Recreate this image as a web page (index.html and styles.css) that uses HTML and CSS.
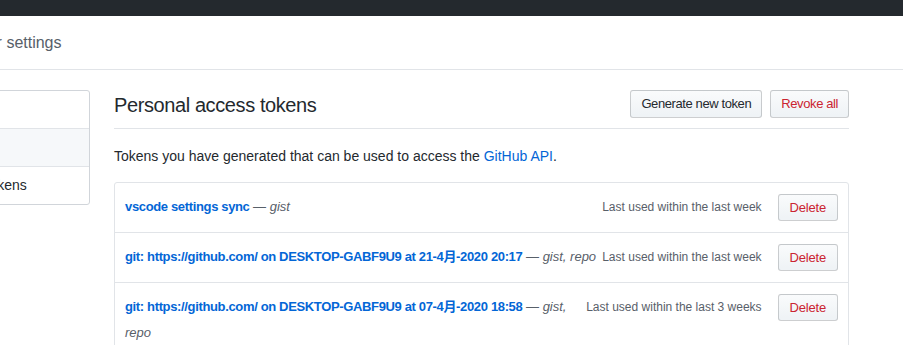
FILE: index.html
```html
<!DOCTYPE html>
<html lang="en">
<head>
    <meta charset="UTF-8">
    <title>Personal access tokens</title>
    <link rel="stylesheet" href="styles.css">
</head>
<body>
    <div class="topbar"></div>
    <div class="pagehead">
        <div class="pagehead-inner">
            <h1 class="pagehead-title">Developer settings</h1>
        </div>
    </div>
    <div class="layout">
        <nav class="menu">
            <a class="menu-item" href="#">GitHub Apps</a>
            <a class="menu-item menu-item-hover" href="#">OAuth Apps</a>
            <a class="menu-item menu-item-selected" href="#">Personal access tokens</a>
        </nav>
        <div class="main">
            <div class="subhead">
                <h2 class="subhead-heading">Personal access tokens</h2>
                <div class="subhead-actions">
                    <button class="btn">Generate new token</button>
                    <button class="btn btn-danger">Revoke all</button>
                </div>
            </div>
            <p class="intro">Tokens you have generated that can be used to access the <a href="#">GitHub API</a>.</p>
            <div class="listgroup">
                <div class="listgroup-item">
                    <span class="token-description"><strong><a href="#">vscode settings sync</a></strong> — <em>gist</em></span>
                    <span class="last-used">Last used within the last week</span>
                    <button class="btn btn-sm btn-danger">Delete</button>
                </div>
                <div class="listgroup-item">
                    <span class="token-description"><strong><a href="#">git: https://github.com/ on DESKTOP-GABF9U9 at 21-4月-2020 20:17</a></strong> — <em>gist, repo</em></span>
                    <span class="last-used">Last used within the last week</span>
                    <button class="btn btn-sm btn-danger">Delete</button>
                </div>
                <div class="listgroup-item">
                    <span class="token-description"><strong><a href="#">git: https://github.com/ on DESKTOP-GABF9U9 at 07-4月-2020 18:58</a></strong> — <em>gist, repo</em></span>
                    <span class="last-used">Last used within the last 3 weeks</span>
                    <button class="btn btn-sm btn-danger">Delete</button>
                </div>
            </div>
        </div>
    </div>
</body>
</html>
```

FILE: styles.css
```css
body {
    margin: 0;
    font-family: 'Liberation Sans', 'Noto Sans CJK SC', sans-serif;
    font-size: 14px;
    line-height: 1.5;
    color: #24292e;
    background: #fff;
    overflow: hidden;
}

a {
    color: #0366d6;
    text-decoration: none;
}

.topbar {
    height: 16px;
    background: #24292e;
}

.pagehead {
    height: 53px;
    border-bottom: 1px solid #e1e4e8;
}

.pagehead-inner {
    margin-left: -71px;
    padding-top: 15px;
}

.pagehead-title {
    margin: 0;
    font-size: 16px;
    font-weight: 400;
    line-height: 24px;
    color: #586069;
}

.layout {
    display: flex;
    align-items: flex-start;
    margin-left: -142px;
    margin-top: 20px;
    width: 991px;
}

.menu {
    width: 232px;
    box-sizing: border-box;
    flex-shrink: 0;
    border: 1px solid #d1d5da;
    border-radius: 3px;
}

.menu-item {
    display: block;
    height: 37px;
    line-height: 37px;
    padding: 0 12px 0 20px;
    color: #24292e;
    border-bottom: 1px solid #e1e4e8;
}

.menu-item:last-child {
    border-bottom: none;
}

.menu-item-hover {
    background: #f6f8fa;
}

.main {
    flex: 1;
    margin-left: 24px;
}

.subhead {
    display: flex;
    align-items: center;
    padding-bottom: 8px;
    border-bottom: 1px solid #e1e4e8;
}

.subhead-heading {
    flex: 1;
    margin: 0;
    font-size: 20px;
    font-weight: 400;
    line-height: 30px;
    letter-spacing: -0.4px;
}

.subhead-actions {
    display: flex;
    gap: 8px;
    margin-top: -2px;
}

.btn {
    font-family: inherit;
    font-size: 13px;
    line-height: 20px;
    letter-spacing: -0.4px;
    padding: 3px 10px;
    color: #24292e;
    background: linear-gradient(-180deg, #fafbfc 0%, #eff3f6 90%);
    border: 1px solid rgba(27, 31, 35, 0.2);
    border-radius: 3px;
    cursor: pointer;
}

.btn-danger {
    color: #cb2431;
}

.btn-sm {
    line-height: 19px;
    padding: 3px 11px;
    margin-left: 16px;
    letter-spacing: -0.2px;
}

.intro {
    margin: 17px 0 15px;
}

.listgroup {
    border: 1px solid #e1e4e8;
    border-radius: 3px;
}

.listgroup-item {
    display: flex;
    align-items: flex-start;
    padding: 11px 10px;
    font-size: 13px;
    line-height: 26px;
    border-bottom: 1px solid #e1e4e8;
}

.token-description {
    flex: 1;
    color: #586069;
}

.token-description strong {
    font-weight: 600;
    letter-spacing: -0.35px;
}

.last-used {
    margin-left: 4px;
    font-size: 12px;
    color: #586069;
    white-space: nowrap;
}
```
